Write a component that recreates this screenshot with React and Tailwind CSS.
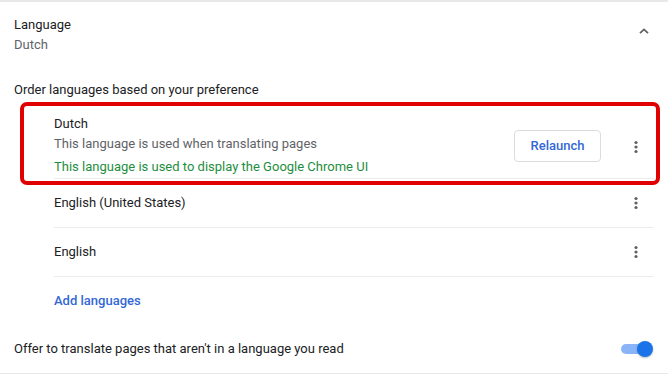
import React from "react";

function Kebab({ className = "" }) {
  return (
    <div className={"w-[36px] h-[36px] flex items-center justify-center " + className}>
      <svg width="4" height="14" viewBox="0 0 4 14">
        <circle cx="2" cy="2.5" r="1.6" fill="#5f6368" />
        <circle cx="2" cy="7" r="1.6" fill="#5f6368" />
        <circle cx="2" cy="11.5" r="1.6" fill="#5f6368" />
      </svg>
    </div>
  );
}

export default function App() {
  return (
    <div
      className="w-[668px] h-[375px] bg-white overflow-hidden text-[13px] text-[#202124]"
      style={{ fontFamily: "Roboto, 'Liberation Sans', Arial, sans-serif" }}
    >
      <div className="border-t-[2px] border-[#e8e8e8]">
        <div className="flex items-center pl-[14px] pr-[19px] pt-[13px] pb-[5px]">
          <div className="flex-1">
            <div className="leading-[20px]">Language</div>
            <div className="leading-[20px] text-[#5f6368]">Dutch</div>
          </div>
          <svg width="10" height="6" viewBox="0 0 10 6" className="mt-[-8px]">
            <path d="M1 5.2 L5 1.4 L9 5.2" fill="none" stroke="#5f6368" strokeWidth="1.8" />
          </svg>
        </div>
        <div className="pl-[14px] pt-[20px] leading-[20px]">Order languages based on your preference</div>
        <div className="pl-[54px] pr-[14px]">
          <div className="relative flex items-center border-b border-[#ececec] pt-[14px] pb-[1px]">
            <div className="flex-1">
              <div className="leading-[20px]">Dutch</div>
              <div className="leading-[20px] text-[#5f6368]">This language is used when translating pages</div>
              <div className="leading-[20px] mt-[3px] text-[#1e8e3e]">This language is used to display the Google Chrome UI</div>
            </div>
            <button className="w-[87px] h-[32px] border border-[#dadce0] rounded-[4px] text-[#3367d6] font-medium text-[13px] mr-[17px] mt-[1px]">
              Relaunch
            </button>
            <Kebab className="mt-[2px]" />
            <div className="absolute left-[-34px] right-[-6px] top-[2px] bottom-[-7px] border-[4px] border-[#e00000] rounded-[7px] pointer-events-none" />
          </div>
          <div className="flex items-center h-[49px] border-b border-[#ececec]">
            <div className="flex-1">English (United States)</div>
            <Kebab />
          </div>
          <div className="flex items-center h-[49px] border-b border-[#ececec]">
            <div className="flex-1">English</div>
            <Kebab />
          </div>
          <div className="flex items-center h-[48px] text-[#3367d6] font-medium">Add languages</div>
        </div>
        <div className="flex items-center h-[49px] pl-[14px] pr-[15px] border-b border-[#e8e8e8]">
          <div className="flex-1">Offer to translate pages that aren't in a language you read</div>
          <div className="relative w-[32px] h-[16px] flex items-center">
            <div className="w-[27px] h-[10px] rounded-full bg-[#8ab4f8]" />
            <div className="absolute right-0 top-0 w-[16px] h-[16px] rounded-full bg-[#1a73e8] shadow-[0_1px_2px_rgba(0,0,0,0.25)]" />
          </div>
        </div>
      </div>
    </div>
  );
}
